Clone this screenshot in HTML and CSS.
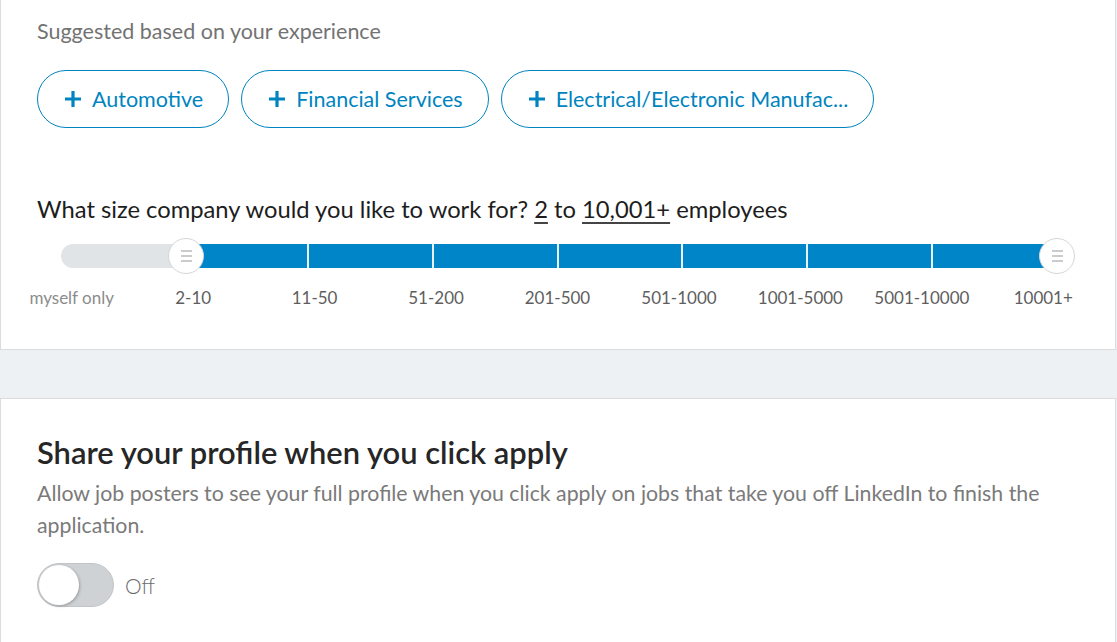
FILE: index.html
```html
<!DOCTYPE html>
<html>
<head>
<meta charset="utf-8">
<link rel="stylesheet" href="styles.css">
</head>
<body>
<div class="page">
  <section class="card card-top">
    <p class="hint">Suggested based on your experience</p>
    <div class="pills">
      <button class="pill"><svg class="plus" viewBox="0 0 18 18"><path d="M9 1v16M1 9h16"/></svg><span>Automotive</span></button>
      <button class="pill"><svg class="plus" viewBox="0 0 18 18"><path d="M9 1v16M1 9h16"/></svg><span>Financial Services</span></button>
      <button class="pill"><svg class="plus" viewBox="0 0 18 18"><path d="M9 1v16M1 9h16"/></svg><span>Electrical/Electronic Manufac...</span></button>
    </div>
    <h3 class="question">What size company would you like to work for? <u>2</u> to <u>10,001+</u> employees</h3>
    <div class="slider">
      <div class="track">
        <div class="seg seg-off"></div>
        <div class="seg seg-on first"></div>
        <div class="seg seg-on"></div>
        <div class="seg seg-on"></div>
        <div class="seg seg-on"></div>
        <div class="seg seg-on"></div>
        <div class="seg seg-on"></div>
        <div class="seg seg-on last"></div>
      </div>
      <span class="handle handle-min"><i></i><i></i><i></i></span>
      <span class="handle handle-max"><i></i><i></i><i></i></span>
    </div>
    <div class="labels">
      <span class="muted">myself only</span>
      <span>2-10</span>
      <span>11-50</span>
      <span>51-200</span>
      <span>201-500</span>
      <span>501-1000</span>
      <span>1001-5000</span>
      <span>5001-10000</span>
      <span>10001+</span>
    </div>
  </section>
  <div class="gap"></div>
  <section class="card card-bottom">
    <h2 class="title">Share your profile when you click apply</h2>
    <p class="desc">Allow job posters to see your full profile when you click apply on jobs that take you off LinkedIn to finish the application.</p>
    <div class="toggle-row">
      <span class="toggle"><span class="knob"></span></span>
      <span class="toggle-label">Off</span>
    </div>
  </section>
</div>
</body>
</html>
```

FILE: styles.css
```css
html, body {
  margin: 0;
  padding: 0;
  background: #eef1f4;
}
body {
  font-family: "Lato", "Open Sans", sans-serif;
  height: 642px;
  overflow: hidden;
}
.page {
  width: 1116px;
}
.card {
  background: #fff;
  border: 1px solid #dcdcdc;
  padding: 0 36px;
}
.card-top {
  border-top: none;
  padding-top: 17px;
  height: 332px;
}
.gap {
  height: 48px;
}
.hint {
  margin: 0;
  font-size: 21.5px;
  line-height: 28px;
  color: #737373;
}
.pills {
  display: flex;
  gap: 12px;
  margin-top: 25px;
}
.pill {
  display: flex;
  align-items: center;
  gap: 10px;
  height: 58px;
  padding: 0 25px 0 26px;
  border: 1px solid #0084bf;
  border-radius: 29px;
  background: #fff;
  color: #0084bf;
  font-family: inherit;
  font-size: 21.5px;
  font-weight: 400;
}
.plus {
  width: 18px;
  height: 18px;
  stroke: #0084bf;
  stroke-width: 3.2;
  fill: none;
}
.question {
  margin: 66px 0 0;
  font-size: 23.75px;
  line-height: 30px;
  font-weight: 400;
  color: #1d1d1d;
}
.question u {
  text-decoration-color: #444;
  text-underline-offset: 4px;
}
.slider {
  position: relative;
  margin: 14px 0 0 24px;
  width: 995px;
  height: 36px;
  display: flex;
  align-items: center;
}
.track {
  display: flex;
  width: 100%;
  height: 24px;
}
.seg {
  flex: 1;
  height: 24px;
}
.seg-off {
  background: #e1e4e7;
  border-radius: 12px 0 0 12px;
}
.seg-on {
  background: #0086c8;
  border-left: 2px solid #e8f1f7;
}
.seg-on.first {
  border-left: none;
}
.handle {
  position: absolute;
  top: 0;
  width: 34px;
  height: 34px;
  margin-left: -17px;
  border: 1px solid #d6d6d6;
  border-radius: 50%;
  background: #fff;
  display: flex;
  flex-direction: column;
  align-items: center;
  justify-content: center;
  gap: 2.5px;
}
.handle i {
  display: block;
  width: 11px;
  height: 2.5px;
  background: #cbcbcb;
}
.handle-min { left: 12.5%; }
.handle-max { left: 100%; }
.labels {
  display: grid;
  grid-template-columns: repeat(9, 1fr);
  margin: 13px -25px 0 -26px;
  text-align: center;
  font-size: 17px;
  line-height: 22px;
  color: #5e5e5e;
}
.labels .muted {
  color: #8c8c8c;
}
.card-bottom {
  padding-top: 36px;
  padding-bottom: 60px;
}
.title {
  margin: 0;
  font-size: 30.9px;
  line-height: 36px;
  font-weight: 600;
  color: #262626;
}
.desc {
  margin: 6px 0 0;
  font-size: 21.3px;
  line-height: 32px;
  color: #7a7a7a;
}
.toggle-row {
  display: flex;
  align-items: center;
  gap: 11px;
  margin-top: 22px;
}
.toggle {
  display: flex;
  align-items: center;
  width: 77px;
  height: 44px;
  box-sizing: border-box;
  border-radius: 22px;
  background: #cfd2d5;
  border: 1px solid #c2c5c8;
  padding: 1px;
}
.knob {
  width: 40px;
  height: 40px;
  border-radius: 50%;
  background: #fff;
  box-shadow: 1px 1px 3px rgba(0,0,0,.25);
}
.toggle-label {
  font-size: 21px;
  font-weight: 300;
  color: #6b6b6b;
}
```
